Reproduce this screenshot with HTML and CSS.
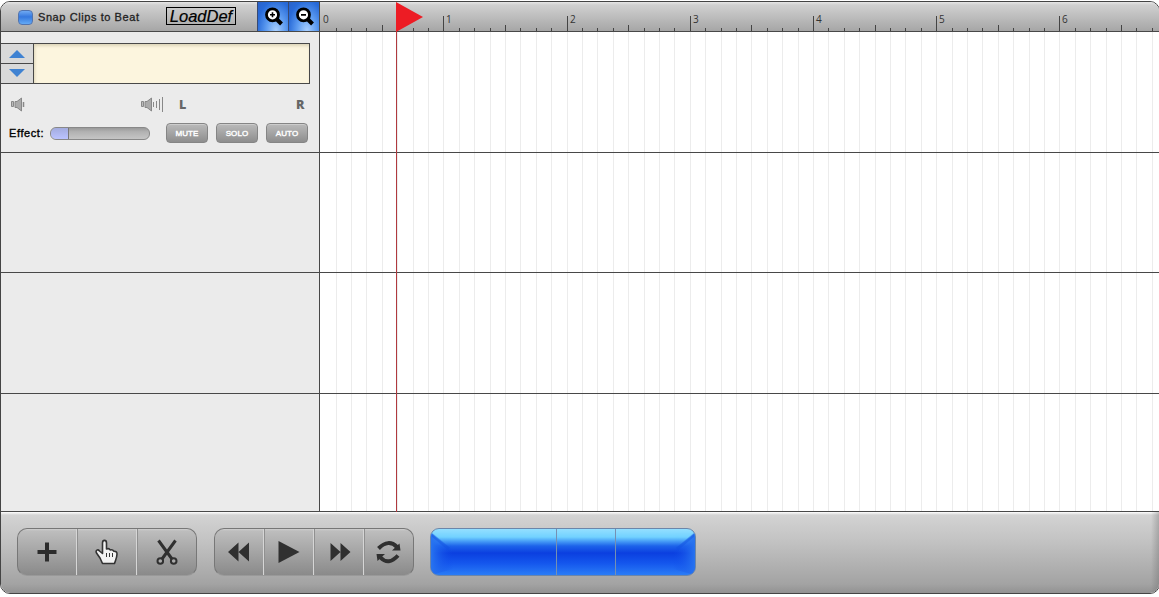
FILE: index.html
```html
<!DOCTYPE html>
<html lang="en">
<head>
<meta charset="utf-8">
<title>Track editor</title>
<link rel="stylesheet" href="styles.css">
</head>
<body>
<div class="app">
  <header class="top">
    <div class="options">
      <span class="check"></span>
      <span class="snap">Snap Clips to Beat</span>
      <span class="load">LoadDef</span>
      <span class="zoom">
        <svg width="20" height="20" viewBox="0 0 20 20"><path d="M12 12.500L17.500 18" stroke="#000" stroke-width="4"/><circle cx="8.500" cy="8.800" r="6" fill="#fff" stroke="#000" stroke-width="2.800"/><path d="M6 8.800h5M8.500 6.300v5" stroke="#000" stroke-width="1.600"/></svg>
      </span>
      <span class="zoom">
        <svg width="20" height="20" viewBox="0 0 20 20"><path d="M12 12.500L17.500 18" stroke="#000" stroke-width="4"/><circle cx="8.500" cy="8.800" r="6" fill="#fff" stroke="#000" stroke-width="2.800"/><path d="M6 8.800h5" stroke="#000" stroke-width="1.800"/></svg>
      </span>
    </div>
    <div class="ruler"><svg class="ticks" id="ticks" width="839" height="29"></svg></div>
  </header>
  <main class="body">
    <aside class="side">
      <section class="track first">
        <div class="namebar">
          <div class="arrows">
            <span><svg width="16" height="8"><path d="M0 8L8 0l8 8z" fill="#3f82d2"/></svg></span>
            <span><svg width="16" height="8"><path d="M0 0h16L8 8z" fill="#3f82d2"/></svg></span>
          </div>
          <div class="name"></div>
        </div>
        <div class="levels">
          <svg class="quiet" width="15" height="16" viewBox="0 0 15 16"><path d="M.5 5.500h2v5h-2z" fill="#bbb" stroke="#888"/><path d="M4 5.500h2L10.500 2v13L6 11.500H4z" fill="#aaa" stroke="#888"/><path d="M12.500 6v5" stroke="#888" stroke-width="1.500"/></svg>
          <svg class="loud" width="24" height="16" viewBox="0 0 24 16"><path d="M.5 5.500h2v5h-2z" fill="#bbb" stroke="#888"/><path d="M4 5.500h2L10.500 2v13L6 11.500H4z" fill="#aaa" stroke="#888"/><path d="M12.500 6v5M15.500 5v7M18.500 3v11M21.500 1v15" stroke="#888"/></svg>
          <b class="left">L</b><b class="right">R</b>
        </div>
        <div class="effects">
          <span class="label">Effect:</span><span class="slider"><i></i></span>
          <span class="pill">MUTE</span><span class="pill">SOLO</span><span class="pill">AUTO</span>
        </div>
      </section>
      <section class="track second"></section>
      <section class="track third"></section>
      <section class="track last"></section>
    </aside>
    <div class="lanes">
      <div class="track first"></div><div class="track second"></div><div class="track third"></div><div class="track last"></div>
      <svg class="grid" id="grid" width="839" height="479"></svg>
    </div>
  </main>
  <footer class="bottom">
    <div class="group tools">
      <span><svg width="59" height="46"><path d="M19.500 23h19M29 13.500v19" stroke="#2c2c2c" stroke-width="4"/></svg></span>
      <span><svg width="59" height="46"><path d="M25.500 34.500L23 29l-3.500-5c-1.500-3 1.500-4 3-2l3 2.500V14c0-3.500 4-3.500 4 0v6c2-.8 3.200 0 3.700 1 2-.6 3 .2 3.500 1.200 2.500-.2 3.300 1 3.300 2.800 0 3.500-1.500 6-2.500 9.500z" fill="#f2f2f2" stroke="#333" stroke-width="1.600" stroke-linejoin="round"/><path d="M29.500 24v4M32.500 24v4M35.500 24v4" stroke="#333"/></svg></span>
      <span><svg width="59" height="46"><path d="M21.500 11.500L35 30M38.500 11.500L25 30" stroke="#303030" stroke-width="3"/><circle cx="23.300" cy="32" r="2.800" fill="#aaa" stroke="#303030" stroke-width="2"/><circle cx="36.700" cy="32" r="2.800" fill="#aaa" stroke="#303030" stroke-width="2"/></svg></span>
    </div>
    <div class="group transport">
      <span><svg width="48" height="46"><path d="M23.500 13.500v19L13 23zM34 13.500v19L23.500 23z" fill="#303030"/></svg></span>
      <span><svg width="49" height="46"><path d="M14.500 12v22L35.500 23z" fill="#303030"/></svg></span>
      <span><svg width="49" height="46"><path d="M16.500 14v18L26.500 23zM26.500 14v18L36.500 23z" fill="#303030"/></svg></span>
      <span><svg width="49" height="46"><path d="M14.500 19.500Q24.500 9.500 33 18M34 26.500Q24.500 37 16.500 28.500" fill="none" stroke="#303030" stroke-width="4"/><path d="M35.500 14.500l1 7h-8.500zM13.500 32l-1-7H21z" fill="#303030"/></svg></span>
    </div>
    <div class="display">
      <svg width="264" height="46">
        <defs>
          <linearGradient id="left-edge"><stop stop-color="#2874f0"/><stop offset="1" stop-color="#0f4be8" stop-opacity="0"/></linearGradient>
          <linearGradient id="right-edge" x1="1" x2="0"><stop stop-color="#2874f0"/><stop offset="1" stop-color="#0f4be8" stop-opacity="0"/></linearGradient>
        </defs>
        <path d="M0 4L22 22V40L0 46z" fill="url(#left-edge)"/>
        <path d="M264 4L242 22V40L264 46z" fill="url(#right-edge)"/>
        <path d="M0 5L18 20" stroke="#1150df" stroke-width="3" opacity=".4"/>
        <path d="M264 5L246 20" stroke="#1150df" stroke-width="3" opacity=".4"/>
        <path d="M125.500 0v46M184.500 0v46" stroke="#7590b2"/>
      </svg>
    </div>
  </footer>
  <svg class="playhead" width="28" height="511"><path d="M.5 29v481" stroke="#b0393f"/><path d="M0 0v30L27 15z" fill="#ed1c24"/></svg>
</div>
<script src="script.js"></script>
</body>
</html>
```
FILE: styles.css
```css
* { box-sizing: border-box; }
html, body { margin: 0; width: 1159px; height: 597px; overflow: hidden; background: #fff; }
body { padding-top: 1px; font-family: "Liberation Sans", Arial, sans-serif; }
svg { display: block; }
.app { position: relative; width: 1160px; height: 593px; border: 1px solid #444; border-radius: 10px; overflow: hidden; display: flex; flex-direction: column; }
.top { height: 30px; flex: none; display: flex; border-bottom: 1px solid #484848; background: linear-gradient(#e6e6e6 0, #d0d0d0 3px, #a6a6a6); }
.options { width: 319px; flex: none; display: flex; align-items: center; border-right: 1px solid #484848; }
.check { width: 15px; height: 15px; margin: 1px 0 0 17px; border: 1px solid #5274ae; border-radius: 4px; background: linear-gradient(#6fa9f3, #3578de 45%, #64aaf5); }
.snap { width: 128px; margin: 1px 0 0 5px; font-size: 11px; letter-spacing: .58px; color: #222; white-space: nowrap; -webkit-text-stroke: .3px #222; }
.load { width: 70px; height: 18px; margin-top: -1px; border: 1px solid #000; font: italic 16.5px/17px "Liberation Sans", Arial, sans-serif; text-align: center; margin-right: 21px; flex: none; -webkit-text-stroke: .2px #000; }
.zoom { width: 31px; height: 29px; flex: none; padding: 4px 0 0 6px; border-left: 1px solid #384a72; background: radial-gradient(ellipse at 60% 100%, #a9d0ff 0, #5b9af0 40%, #286ad8 75%, #2a62c8 100%); }
.ruler { flex: 1; }
.ticks text { font: 10px "Open Sans", sans-serif; fill: #333; }
.body { display: flex; height: 480px; flex: none; border-bottom: 1px solid #484848; }
.side { width: 319px; flex: none; background: #ebebeb; border-right: 1px solid #484848; }
.track { border-bottom: 1px solid #484848; }
.first, .third { height: 121px; }
.second { height: 120px; }
.last { height: 117px; border: 0; }
.namebar { display: flex; width: 309px; height: 41px; margin-top: 11px; border: 1px solid #484848; border-left: 0; }
.first { overflow: hidden; }
.arrows { width: 33px; border-right: 1px solid #484848; background: #d9d9d9; }
.arrows span { display: flex; height: 19px; align-items: center; justify-content: center; }
.arrows span:first-child { height: 20px; border-bottom: 1px solid #484848; }
.arrows span:last-child { height: 18px; }
.name { flex: 1; background: #fcf5de; box-shadow: inset 1px 2px 3px #ddd5ba; }
.levels { display: flex; height: 16px; margin-top: 12px; color: #666; font: bold 12.5px/18px "Noto Sans", sans-serif; }
.quiet { margin-left: 10px; }
.loud { margin-left: 115px; }
.left { margin-left: 14px; width: 117px; }
.effects { display: flex; align-items: center; height: 20px; margin-top: 11px; padding-left: 8px; }
.label { width: 41px; font-size: 11px; letter-spacing: .6px; white-space: nowrap; -webkit-text-stroke: .35px #000; }
.slider { width: 100px; height: 13px; margin-right: 16px; border: 1px solid #888; border-radius: 6px; overflow: hidden; background: linear-gradient(#999, #b2b2b2 35%, #c5c5c5); }
.slider i { display: block; width: 18px; height: 11px; border-right: 1px solid #777; background: linear-gradient(#a3acdf, #bbc3ff); }
.pill { width: 42px; height: 20px; margin-right: 8px; border: 1px solid #858585; border-radius: 4px; background: linear-gradient(#bababa, #8e8e8e); box-shadow: inset 0 1px #ccc; color: #fff; font-size: 8px; line-height: 19px; text-align: center; letter-spacing: .1px; -webkit-text-stroke: .4px #fff; }
.lanes { position: relative; flex: 1; background: #fff; }
.grid { position: absolute; left: 0; top: 0; }
.bottom { flex: 1; display: flex; align-items: flex-start; padding: 16px 0 0 16px; background: linear-gradient(to right, transparent 1150px, rgba(100,100,100,.35) 1158px), linear-gradient(#fff 0, #f0f0f0 1px, #d3d3d3 3px, #c2c2c2 30px, #a3a3a3 72px, #929292); }
.group { display: flex; height: 48px; flex: none; border: 1px solid #777; border-bottom-color: #999; border-radius: 10px; overflow: hidden; background: linear-gradient(#d0d0d0 0, #bdbdbd 2px, #8a8a8a); }
.tools { width: 180px; margin-right: 17px; }
.transport { width: 200px; margin-right: 16px; }
.group span { flex: none; width: 60px; border-right: 1px solid #d6d6d6; box-shadow: 1px 0 #909090; }
.group span:first-child { width: 59px; }
.transport span { width: 50px; }
.transport span:first-child { width: 49px; }
.group span:last-child { border: 0; box-shadow: none; }
.display { width: 266px; height: 48px; border: 1px solid #6b86aa; border-radius: 9px; overflow: hidden; background: linear-gradient(#94dfff 0, #72d2ff 8px, #49a0f7 12px, #1d63ea 17px, #0b3fe0 24px, #1456ed 34px, #2a7cf6 46px); }
.playhead { position: absolute; left: 395px; top: 0; }
```
FILE: script.js
```js
const ns = "http://www.w3.org/2000/svg";
const ticks = document.getElementById("ticks");
const grid = document.getElementById("grid");
function line(parent, x, y1, y2, color) {
  const el = document.createElementNS(ns, "path");
  el.setAttribute("d", `M${x + .5} ${y1}V${y2}`);
  el.setAttribute("stroke", color);
  parent.appendChild(el);
}
const tracks = [[0, 120], [121, 240], [241, 361], [362, 479]];
for (let i = 0; i < 55; i++) {
  const x = Math.round(i * 15.4 + .25);
  if (i) {
    line(ticks, x, i % 8 === 0 ? 14 : i % 4 === 0 ? 23 : 26, 29, "#444");
    tracks.forEach(([a, b]) => line(grid, x, a, b, "#ececec"));
  }
  if (i % 8 === 0) {
    const label = document.createElementNS(ns, "text");
    label.setAttribute("x", x + 3);
    label.setAttribute("y", 21);
    label.textContent = i / 8;
    ticks.appendChild(label);
  }
}
```
